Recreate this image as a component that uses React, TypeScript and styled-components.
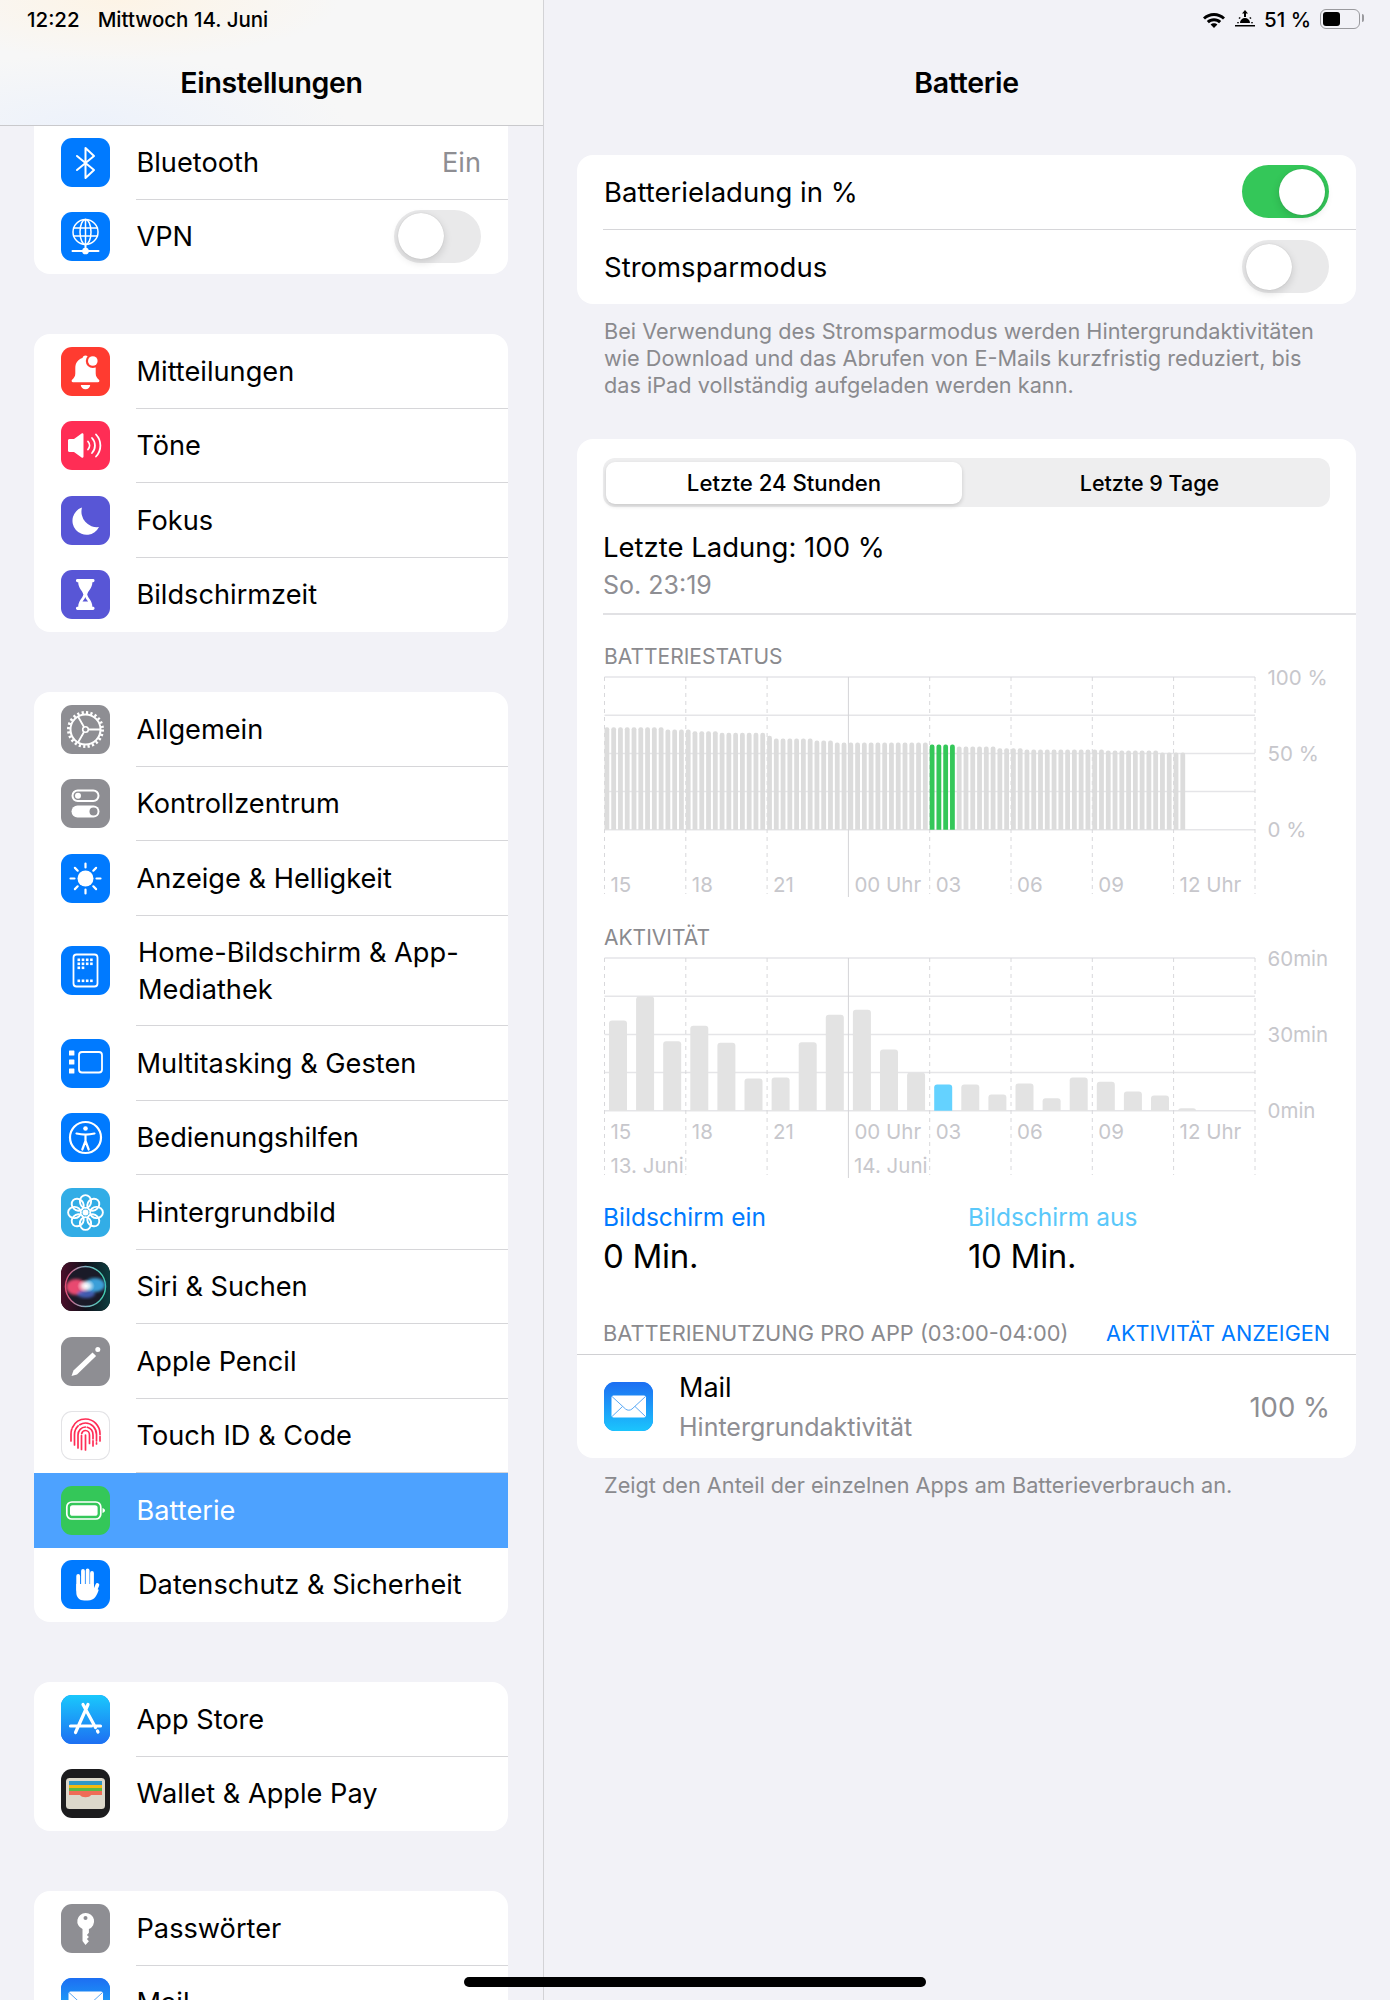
import React from "react";
import styled, { createGlobalStyle } from "styled-components";

const GlobalStyle = createGlobalStyle`
  html, body {
    margin: 0;
    padding: 0;
    background: #f2f2f7;
  }
  body {
    font-family: Inter, "Noto Sans", "Liberation Sans", sans-serif;
    color: #000;
    -webkit-font-smoothing: antialiased;
  }
`;

/* ---------- glyphs, all on a 49x49 icon tile ---------- */

const W = { fill: "none", stroke: "#fff", strokeLinecap: "round", strokeLinejoin: "round" } as const;

const Bluetooth = () => (
  <polyline {...W} strokeWidth={2} points="16,18 33,32 24.5,40 24.5,10 33,18 16,32" />
);

const Vpn = () => (
  <g {...W} strokeWidth={1.5}>
    <circle cx="24.5" cy="20" r="12.5" />
    <ellipse cx="24.5" cy="20" rx="5.5" ry="12.5" />
    <path d="M24.5 7.5v25M12.5 16h24M12.5 24h24" />
    <path d="M24.5 32.5v6M11.5 39h26" strokeWidth={2} />
    <circle cx="24.5" cy="39" r="2.6" fill="#fff" />
  </g>
);

const Bell = () => (
  <g>
    <path
      d="M24.5 8.5c-1.6 0-2.8 1.1-3 2.6-4.6 1.3-7.2 5.2-7.2 10v5.4c0 2.8-1.4 4.6-3.2 6.2-1 .9-.5 2.5 1 2.5h24.8c1.5 0 2-1.6 1-2.5-1.8-1.6-3.2-3.4-3.2-6.2v-5.4c0-5-2.6-8.8-7.2-10-.2-1.5-1.4-2.6-3-2.6z"
      fill="#fff"
    />
    <path d="M19.8 38h9.4a4.7 4.2 0 0 1-9.4 0z" fill="#fff" />
    <circle cx="31.8" cy="14" r="7" fill="#ff3b30" />
    <circle cx="31.8" cy="14" r="4.8" fill="#fff" />
  </g>
);

const Speaker = () => (
  <g>
    <path d="M7 19.5c0-.8.6-1.5 1.5-1.5h4.5l7.6-5.4c.8-.6 1.9 0 1.9 1v21.8c0 1-1.1 1.6-1.9 1L13 31H8.5c-.9 0-1.5-.7-1.5-1.5z" fill="#fff" />
    <path {...W} strokeWidth={1.8} d="M27 20.5a6 6 0 0 1 0 8M31 17a11 11 0 0 1 0 15M35 13.5a16 16 0 0 1 0 22" />
  </g>
);

const Moon = () => <path d="M21 11.5A14 14 0 1 0 38 31 A 15.5 15.5 0 0 1 21 11.5Z" fill="#fff" />;

const Hourglass = () => (
  <g>
    <rect x="15" y="9" width="18.5" height="3.2" rx="1.4" fill="#fff" />
    <rect x="15" y="36.8" width="18.5" height="3.2" rx="1.4" fill="#fff" />
    <path d="M17.2 12h14.2c0 6.2-4.4 8.8-5.2 12.5.8 3.7 5.2 6.3 5.2 12.5H17.2c0-6.2 4.4-8.8 5.2-12.5-.8-3.7-5.2-6.3-5.2-12.5z" fill="#fff" />
    <path d="M21.5 31.5c1.4-1.6 2.2-2.8 2.8-4.4.6 1.6 1.4 2.8 2.8 4.4z" fill="#5856d6" />
  </g>
);

const Gear = () => (
  <g {...W} strokeLinecap="butt">
    <circle cx="24.5" cy="24.5" r="15" strokeWidth={2} />
    <circle cx="24.5" cy="24.5" r="17" strokeWidth={3} strokeDasharray="2.2 2.25" />
    <path d="M27.5 24.5h12M23 22l-6-10.5M23 27l-6 10.5" strokeWidth={1.8} />
    <circle cx="24.5" cy="24.5" r="2.8" strokeWidth={1.6} />
  </g>
);

const Controls = () => (
  <g>
    <rect x="11.5" y="11.5" width="26" height="10.5" rx="5.2" {...W} strokeWidth={2} />
    <circle cx="17" cy="16.8" r="3" fill="#fff" />
    <rect x="10.5" y="26.5" width="28" height="12" rx="6" fill="#fff" />
    <circle cx="32.5" cy="32.5" r="4" fill="#8e8e93" />
  </g>
);

const Sun = () => (
  <g {...W} strokeWidth={2.2}>
    <circle cx="24.5" cy="24.5" r="8" fill="#fff" stroke="none" />
    <path d="M24.5 9.5v4M24.5 35.5v4M9.5 24.5h4M35.5 24.5h4M13.9 13.9l2.8 2.8M32.3 32.3l2.8 2.8M13.9 35.1l2.8-2.8M32.3 16.7l2.8-2.8" />
  </g>
);

const HomeGrid = () => {
  const cells: React.ReactNode[] = [];
  for (let r = 0; r < 3; r++) {
    for (let c = 0; c < (r === 2 ? 2 : 4); c++) {
      cells.push(<rect key={`${r}-${c}`} x={16.5 + c * 4.2} y={12.5 + r * 4} width="2.6" height="2.6" fill="#fff" />);
    }
  }
  for (let c = 0; c < 4; c++) {
    cells.push(<rect key={`d-${c}`} x={16.5 + c * 4.2} y="33.5" width="2.6" height="2.6" fill="#fff" />);
  }
  return (
    <g>
      <rect x="12.5" y="8.5" width="24" height="32" rx="3" {...W} strokeWidth={1.8} />
      {cells}
    </g>
  );
};

const Multitask = () => (
  <g>
    <rect x="8" y="11.5" width="5.4" height="5" fill="#fff" rx="0.6" />
    <rect x="8" y="20.5" width="5.4" height="5" fill="#fff" rx="0.6" />
    <rect x="8" y="29.5" width="5.4" height="5" fill="#fff" rx="0.6" />
    <rect x="18" y="13" width="23" height="20.5" rx="3" {...W} strokeWidth={1.8} />
  </g>
);

const Accessibility = () => (
  <g {...W} strokeWidth={2.2}>
    <circle cx="24.5" cy="24.5" r="15.5" />
    <circle cx="24.5" cy="15.5" r="2.3" fill="#fff" stroke="none" />
    <path d="M15.5 20.5c6 1.4 12 1.4 18 0M24.5 21.5v7M24.5 28l-3.2 8.5M24.5 28l3.2 8.5" />
  </g>
);

const Flower = () => (
  <g {...W} strokeWidth={1.9}>
    {[0, 45, 90, 135, 180, 225, 270, 315].map((a) => (
      <ellipse key={a} cx="24.5" cy="13.5" rx="5.6" ry="6.4" transform={`rotate(${a} 24.5 24.5)`} />
    ))}
    <circle cx="24.5" cy="24.5" r="3" fill="#fff" stroke="none" />
  </g>
);

const Siri = () => (
  <g>
    <defs>
      <linearGradient id="siri-bg" x1="0" y1="0" x2="1" y2="0">
        <stop offset="0" stopColor="#4b0f2a" />
        <stop offset="0.5" stopColor="#10101a" />
        <stop offset="1" stopColor="#0d3d40" />
      </linearGradient>
      <linearGradient id="siri-ring" x1="0" y1="0" x2="1" y2="0">
        <stop offset="0" stopColor="#e0507a" />
        <stop offset="0.5" stopColor="#7fb0c0" />
        <stop offset="1" stopColor="#3fd0b0" />
      </linearGradient>
      <radialGradient id="siri-core">
        <stop offset="0" stopColor="#fff" />
        <stop offset="0.4" stopColor="#fff" stopOpacity="0.75" />
        <stop offset="1" stopColor="#fff" stopOpacity="0" />
      </radialGradient>
      <filter id="siri-blur">
        <feGaussianBlur stdDeviation="1.6" />
      </filter>
    </defs>
    <rect width="49" height="49" fill="url(#siri-bg)" />
    <circle cx="24.5" cy="24.5" r="20" fill="#1a1a28" stroke="url(#siri-ring)" strokeWidth="1.4" />
    <g filter="url(#siri-blur)">
      <ellipse cx="15" cy="25" rx="10" ry="8" fill="#e8486f" />
      <ellipse cx="34" cy="23" rx="10" ry="7" fill="#3a9fd8" />
      <ellipse cx="25" cy="32" rx="9" ry="4" fill="#4a6ad0" opacity="0.8" />
    </g>
    <ellipse cx="25" cy="24" rx="9" ry="7" fill="url(#siri-core)" />
  </g>
);

const Pencil = () => (
  <g fill="#fff">
    <path d="M10.5 39l2-5.5L31.5 15.5l3.6 3.6L16 37.5z" />
    <circle cx="36.8" cy="12.6" r="2.5" />
  </g>
);

const Fingerprint = () => (
  <g fill="none" stroke="#ff2d55" strokeWidth="1.7" strokeLinecap="round">
    <path d="M10 30V23a14.5 15 0 0 1 29 0v7" strokeDasharray="12 1.6 40 2" />
    <path d="M13.5 34V23.5a11 11.5 0 0 1 22 0V33" strokeDasharray="20 2 30 2" />
    <path d="M17 37V24a7.5 8 0 0 1 15 0v11" strokeDasharray="25 2 14 2" />
    <path d="M20.5 38.5V24a4 4.5 0 0 1 8 0v13" strokeDasharray="14 2 20" />
    <path d="M24.5 24v15" />
  </g>
);

const BatteryTile = () => (
  <g>
    <rect x="5.8" y="16" width="34" height="17" rx="5" {...W} strokeWidth={1.7} />
    <rect x="9" y="19.2" width="27.6" height="10.6" rx="2.6" fill="#fff" />
    <path d="M41.5 22c1.5.4 2.5 1.4 2.5 2.5s-1 2.1-2.5 2.5z" fill="#fff" />
  </g>
);

const Hand = () => (
  <g>
    <g {...W} strokeWidth={3.8}>
      <path d="M17.2 16v14M22 11v16M26.6 10.5V27M31 13v16M33 33l3.4-8" />
    </g>
    <path d="M15.3 24h17.6v7.5l2-3 2.8 1.2c-1.6 5-3.6 10.8-11 10.8h-3.4c-5 0-8-3.5-8-8z" fill="#fff" />
  </g>
);

const AppStore = () => (
  <g>
    <defs>
      <linearGradient id="store-bg" x1="0" y1="0" x2="0" y2="1">
        <stop offset="0" stopColor="#1ac8fc" />
        <stop offset="1" stopColor="#1d6ff2" />
      </linearGradient>
    </defs>
    <rect width="49" height="49" fill="url(#store-bg)" />
    <path {...W} strokeWidth={3.2} d="M22 9.500l12.500 23M27 9.500L14.500 37.500M9.500 31h21M34 31h5.500M36.500 36l.5 1" />
  </g>
);

const Wallet = () => (
  <g>
    <rect x="5" y="9" width="39" height="31" rx="3.5" fill="#dcd8cb" />
    <rect x="8" y="12" width="33" height="4" fill="#3098c8" />
    <rect x="8" y="16" width="33" height="3" fill="#f5b90f" />
    <rect x="8" y="19" width="33" height="3" fill="#5bb947" />
    <path d="M8 22h33v4H30c-1.5 3-9.500 3-11 0H8z" fill="#ef6c57" />
  </g>
);

const Key = () => (
  <g>
    <path
      d="M24.5 9a8.300 8.300 0 0 0-3 16V37l3 4 3.400-3.800-2-2.200 2-2-2-2 2-2.200V25a8.300 8.300 0 0 0-3.400-16z"
      fill="#fff"
    />
    <circle cx="24.5" cy="14" r="2" fill="#8e8e93" />
  </g>
);

const Envelope = ({ id }: { id: string }) => (
  <g>
    <defs>
      <linearGradient id={id} x1="0" y1="0" x2="0" y2="1">
        <stop offset="0" stopColor="#1d6ef2" />
        <stop offset="1" stopColor="#1bc5fd" />
      </linearGradient>
    </defs>
    <rect width="49" height="49" fill={`url(#${id})`} />
    <rect x="7.500" y="13.500" width="34.500" height="22" rx="2" fill="#fff" />
    <path d="M8 14.500l13.500 12.500c1.800 1.600 4.700 1.600 6.500 0L41.500 14.500M8 34.500l10.500-10M41.500 34.500L31 24.500" fill="none" stroke="#5aa9f5" strokeWidth="1" />
  </g>
);

/* ---------- sidebar data ---------- */

type Item = {
  label: string;
  bg: string;
  glyph: React.ReactNode;
  value?: string;
  toggle?: boolean;
  tall?: boolean;
  shift?: boolean;
  active?: boolean;
  outlined?: boolean;
};

const BLUE = "#007aff";
const GRAY = "#8e8e93";
const INDIGO = "#5856d6";

const GROUPS: Item[][] = [
  [
    { label: "Bluetooth", bg: BLUE, glyph: <Bluetooth />, value: "Ein" },
    { label: "VPN", bg: BLUE, glyph: <Vpn />, toggle: true },
  ],
  [
    { label: "Mitteilungen", bg: "#ff3b30", glyph: <Bell /> },
    { label: "Töne", bg: "#ff2d55", glyph: <Speaker /> },
    { label: "Fokus", bg: INDIGO, glyph: <Moon /> },
    { label: "Bildschirmzeit", bg: INDIGO, glyph: <Hourglass /> },
  ],
  [
    { label: "Allgemein", bg: GRAY, glyph: <Gear /> },
    { label: "Kontrollzentrum", bg: GRAY, glyph: <Controls /> },
    { label: "Anzeige & Helligkeit", bg: BLUE, glyph: <Sun /> },
    { label: "Home-Bildschirm & App-Mediathek", bg: BLUE, glyph: <HomeGrid />, tall: true, shift: true },
    { label: "Multitasking & Gesten", bg: BLUE, glyph: <Multitask /> },
    { label: "Bedienungshilfen", bg: BLUE, glyph: <Accessibility /> },
    { label: "Hintergrundbild", bg: "#32ade6", glyph: <Flower /> },
    { label: "Siri & Suchen", bg: "#111", glyph: <Siri /> },
    { label: "Apple Pencil", bg: GRAY, glyph: <Pencil /> },
    { label: "Touch ID & Code", bg: "#fff", glyph: <Fingerprint />, outlined: true },
    { label: "Batterie", bg: "#34c759", glyph: <BatteryTile />, active: true },
    { label: "Datenschutz & Sicherheit", bg: BLUE, glyph: <Hand />, shift: true },
  ],
  [
    { label: "App Store", bg: BLUE, glyph: <AppStore /> },
    { label: "Wallet & Apple Pay", bg: "#1c1c1e", glyph: <Wallet /> },
  ],
  [
    { label: "Passwörter", bg: GRAY, glyph: <Key /> },
    { label: "Mail", bg: BLUE, glyph: <Envelope id="mail-side" /> },
  ],
];

/* ---------- charts ---------- */

const LINES_X = [1.5, 82.8, 164.1, 245.4, 326.7, 408, 489.3, 570.6, 652];
const HOURS = ["15", "18", "21", "00 Uhr", "03", "06", "09", "12 Uhr"];
const GRID_Y = [5, 43.2, 81.4, 119.6, 157.8];
const STEP = 6.775;

const LEVEL_RUNS: [number, number][] = [
  [288, 9], [295, 4], [300, 4], [305, 7], [314, 1], [322, 6], [328, 3],
  [334, 14], [340, 4], [346, 6], [351, 4], [355, 12], [358, 8], [364, 4],
];
const LEVELS = LEVEL_RUNS.flatMap(([top, n]) => Array<number>(n).fill(top));

const ACTIVITY = [300, 228, 362, 316, 367, 474, 471, 365, 283, 268, 387, 456, 492, 492, 522, 489, 533, 471, 484, 513, 525, 563];

const topBar = (x: number, w: number, top: number, base: number, r: number) =>
  `M${x} ${base}V${top + r}Q${x} ${top} ${x + r} ${top}H${x + w - r}Q${x + w} ${top} ${x + w} ${top + r}V${base}Z`;

const ChartGrid = ({ yLabels, children, dates }: { yLabels: string[]; children: React.ReactNode; dates?: boolean }) => (
  <ChartSvg viewBox="0 -6 730 236">
    {GRID_Y.map((y) => (
      <line key={y} x1={1.5} x2={652} y1={y} y2={y} stroke="#e5e5e8" strokeWidth={1.5} />
    ))}
    {LINES_X.map((x, i) =>
      i === 3 ? (
        <line key={x} x1={x} x2={x} y1={5} y2={225} stroke="#d4d4d7" strokeWidth={1} />
      ) : (
        <line key={x} x1={x} x2={x} y1={5} y2={222} stroke="#d8d8db" strokeWidth={1} strokeDasharray="4 4" />
      ),
    )}
    {children}
    {HOURS.map((h, i) => (
      <AxisText key={h} x={LINES_X[i] + 6} y={dates ? 186 : 220}>
        {h}
      </AxisText>
    ))}
    {dates && (
      <>
        <AxisText x={7.5} y={220}>13. Juni</AxisText>
        <AxisText x={251} y={220}>14. Juni</AxisText>
      </>
    )}
    {yLabels.map((l, i) => (
      <AxisText key={l} x={664.5} y={12.5 + i * 76.4}>
        {l}
      </AxisText>
    ))}
  </ChartSvg>
);

const BatteryChart = () => (
  <ChartGrid yLabels={["100 %", "50 %", "0 %"]}>
    {LEVELS.map((top, i) => (
      <path
        key={i}
        d={topBar(1.5 + i * STEP, 4.8, 157.8 - (596 - top) / 3, 157.8, 2.2)}
        fill={i >= 48 && i <= 51 ? "#34c759" : "#dcdcdc"}
      />
    ))}
  </ChartGrid>
);

const ActivityChart = () => (
  <ChartGrid yLabels={["60min", "30min", "0min"]} dates>
    {ACTIVITY.map((top, i) => (
      <path
        key={i}
        d={topBar(6 + i * 27.1, 18, 157.8 - (571 - top) / 3, 157.8, 3)}
        fill={i === 12 ? "#64d2ff" : "#e3e3e3"}
      />
    ))}
  </ChartGrid>
);

/* ---------- page ---------- */

export default function App() {
  return (
    <>
      <GlobalStyle />
      <Page>
        <Sidebar>
          <SideHeader>
            <StatusBar>
              <StatusTime>12:22</StatusTime>
              <StatusTime>Mittwoch 14. Juni</StatusTime>
            </StatusBar>
            <NavTitle>Einstellungen</NavTitle>
          </SideHeader>
          <SideList>
            {GROUPS.map((group, g) => (
              <SideGroup key={g} $first={g === 0}>
                {group.map((item) => (
                  <SideRow key={item.label} $tall={item.tall} $active={item.active}>
                    <IconTile $bg={item.bg} $outlined={item.outlined}>
                      <svg viewBox="0 0 49 49" width="49" height="49">
                        {item.glyph}
                      </svg>
                    </IconTile>
                    <SideBody $active={item.active}>
                      <SideLabel $shift={item.shift} $active={item.active}>
                        {item.label}
                      </SideLabel>
                      {item.value && <SideValue>{item.value}</SideValue>}
                      {item.toggle && <Toggle />}
                    </SideBody>
                  </SideRow>
                ))}
              </SideGroup>
            ))}
          </SideList>
        </Sidebar>

        <Detail>
          <StatusBar $end>
            <svg width="24" height="18" viewBox="0 0 24 18">
              <path d="M12 3C7.800 3 4 4.600 1 7.400l2 2.200C5.500 7.300 8.600 6 12 6s6.500 1.300 9 3.600l2-2.200C20 4.600 16.200 3 12 3z" fill="#000" />
              <path d="M12 8.200c-2.800 0-5.300 1-7.200 2.800l2.100 2.200c1.400-1.200 3.100-2 5.100-2s3.700.800 5.100 2l2.100-2.200c-1.900-1.800-4.400-2.800-7.200-2.800z" fill="#000" />
              <path d="M12 13.300c-1.300 0-2.500.500-3.400 1.300L12 18l3.400-3.400c-.9-.8-2.100-1.300-3.400-1.300z" fill="#000" />
            </svg>
            <svg width="20" height="20" viewBox="0 0 20 20">
              <path d="M10 1l3 3.500h-2V8H9V4.500H7zM5 14a5 5 0 0 1 10 0z" fill="#000" />
              <path d="M0 16h20v1.600H0zM2 13.200h2v1H2zM16 13.200h2v1h-2zM3.500 9l1.400-1 .8 1-1.400 1zM16.500 9l-1.400-1-.8 1 1.400 1z" fill="#000" />
            </svg>
            <StatusTime>51 %</StatusTime>
            <BatteryOutline>
              <BatteryLevel />
            </BatteryOutline>
          </StatusBar>
          <NavTitle>Batterie</NavTitle>

          <Card $top={30}>
            <SettingRow>
              <SettingBody>
                <SettingLabel>Batterieladung in %</SettingLabel>
                <Toggle $on />
              </SettingBody>
            </SettingRow>
            <SettingRow>
              <SettingBody>
                <SettingLabel>Stromsparmodus</SettingLabel>
                <Toggle />
              </SettingBody>
            </SettingRow>
          </Card>
          <Footnote>
            Bei Verwendung des Stromsparmodus werden Hintergrundaktivitäten
            <br />
            wie Download und das Abrufen von E-Mails kurzfristig reduziert, bis
            <br />
            das iPad vollständig aufgeladen werden kann.
          </Footnote>

          <Card $top={40.5}>
            <Segmented>
              <Segment $selected>Letzte 24 Stunden</Segment>
              <Segment $nudge>Letzte 9 Tage</Segment>
            </Segmented>

            <ChargeInfo>
              <ChargeTitle>Letzte Ladung: 100 %</ChargeTitle>
              <ChargeTime>So. 23:19</ChargeTime>
            </ChargeInfo>

            <ChartTitle $top={26.5}>BATTERIESTATUS</ChartTitle>
            <BatteryChart />
            <ChartTitle $top={21.5}>AKTIVITÄT</ChartTitle>
            <ActivityChart />

            <Stats>
              <div>
                <StatLabel $color="#007aff">Bildschirm ein</StatLabel>
                <StatValue>0 Min.</StatValue>
              </div>
              <div>
                <StatLabel $color="#5ac8fa">Bildschirm aus</StatLabel>
                <StatValue>10 Min.</StatValue>
              </div>
            </Stats>

            <UsageHeader>
              <UsageTitle>BATTERIENUTZUNG PRO APP (03:00-04:00)</UsageTitle>
              <UsageLink>AKTIVITÄT ANZEIGEN</UsageLink>
            </UsageHeader>

            <UsageRow>
              <IconTile $bg={BLUE}>
                <svg viewBox="0 0 49 49" width="49" height="49">
                  <Envelope id="mail-usage" />
                </svg>
              </IconTile>
              <UsageText>
                <UsageName>Mail</UsageName>
                <UsageSub>Hintergrundaktivität</UsageSub>
              </UsageText>
              <UsagePercent>100 %</UsagePercent>
            </UsageRow>
          </Card>
          <Footnote>Zeigt den Anteil der einzelnen Apps am Batterieverbrauch an.</Footnote>
        </Detail>

        <HomeIndicator />
      </Page>
    </>
  );
}

const Page = styled.div`
  position: relative;
  display: flex;
  width: 1390px;
  height: 2000px;
  overflow: hidden;
  background: #f2f2f7;
`;

const Sidebar = styled.aside`
  flex: none;
  width: 544px;
  height: 100%;
  border-right: 1px solid #d3d3d6;
  box-sizing: border-box;
  overflow: hidden;
`;

const SideHeader = styled.header`
  position: relative;
  z-index: 1;
  height: 126px;
  margin-bottom: -1px;
  box-sizing: border-box;
  border-bottom: 1px solid #c9c9cc;
  background:
    radial-gradient(220px 60px at 22% 0, #fdf4e6 0, rgba(253, 244, 230, 0) 100%),
    radial-gradient(260px 70px at 16% 100%, #edf2fb 0, rgba(237, 242, 251, 0) 100%),
    #f7f7f7;
`;

const StatusBar = styled.div<{ $end?: boolean }>`
  display: flex;
  align-items: center;
  height: 40px;
  box-sizing: border-box;
  gap: ${(p) => (p.$end ? "9px" : "18px")};
  justify-content: ${(p) => (p.$end ? "flex-end" : "flex-start")};
  padding: ${(p) => (p.$end ? "0 0 2px" : "0 0 2px 27px")};
  margin-right: ${(p) => (p.$end ? "-4px" : "0")};
`;

const StatusTime = styled.span`
  font-size: 20.5px;
  font-weight: 500;
`;

const BatteryOutline = styled.div`
  position: relative;
  width: 40px;
  height: 20px;
  box-sizing: border-box;
  padding: 2px;
  border: 1.5px solid #9a9a9e;
  border-radius: 6px;
  &::after {
    content: "";
    position: absolute;
    right: -5px;
    top: 4px;
    width: 2px;
    height: 8px;
    border-radius: 0 2px 2px 0;
    background: #9a9a9e;
  }
`;

const BatteryLevel = styled.div`
  width: 51%;
  height: 100%;
  border-radius: 3px;
  background: #000;
`;

const NavTitle = styled.h1`
  margin: 0;
  height: 85px;
  display: flex;
  align-items: center;
  justify-content: center;
  font-size: 28.5px;
  font-weight: 600;
  letter-spacing: -0.3px;
`;

const SideList = styled.div`
  display: flex;
  flex-direction: column;
  gap: 60px;
  padding: 0 35px 0 34px;
`;

const SideGroup = styled.div<{ $first?: boolean }>`
  flex: none;
  overflow: hidden;
  background: #fff;
  border-radius: ${(p) => (p.$first ? "0 0 16px 16px" : "16px")};
`;

const SideRow = styled.div<{ $tall?: boolean; $active?: boolean }>`
  display: flex;
  align-items: center;
  height: ${(p) => (p.$tall ? "110.5px" : "74.5px")};
  padding-left: 27px;
  background: ${(p) => (p.$active ? "#4da2ff" : "transparent")};
`;

const IconTile = styled.div<{ $bg: string; $outlined?: boolean }>`
  flex: none;
  width: 49px;
  height: 49px;
  border-radius: 11px;
  overflow: hidden;
  background: ${(p) => p.$bg};
  box-shadow: ${(p) => (p.$outlined ? "inset 0 0 0 1px #e3e3e6" : "none")};
  svg {
    display: block;
  }
`;

const SideBody = styled.div<{ $active?: boolean }>`
  flex: 1;
  align-self: stretch;
  min-width: 0;
  display: flex;
  align-items: center;
  justify-content: space-between;
  margin-left: 25.5px;
  padding-right: 27px;
  box-sizing: border-box;
  border-bottom: 1px solid ${(p) => (p.$active ? "transparent" : "#d6d6d9")};
  ${SideRow}:last-child & {
    border-bottom-color: transparent;
  }
`;

const SideLabel = styled.span<{ $shift?: boolean; $active?: boolean }>`
  margin-left: ${(p) => (p.$shift ? "2.5px" : "1px")};
  padding-top: 1px;
  font-size: 27.2px;
  line-height: 37px;
  color: ${(p) => (p.$active ? "#fff" : "#000")};
`;

const SideValue = styled.span`
  padding-top: 1px;
  font-size: 27.2px;
  color: #8e8e93;
`;

const Toggle = styled.div<{ $on?: boolean }>`
  position: relative;
  flex: none;
  width: 87px;
  height: 53px;
  border-radius: 27px;
  background: ${(p) => (p.$on ? "#34c759" : "#e9e9ea")};
  &::after {
    content: "";
    position: absolute;
    top: 3.5px;
    left: ${(p) => (p.$on ? "37px" : "3.5px")};
    width: 46px;
    height: 46px;
    border-radius: 50%;
    background: #fff;
    box-shadow: 0 3px 8px rgba(0, 0, 0, 0.14), 0 0 1px rgba(0, 0, 0, 0.2);
  }
`;

const Detail = styled.main`
  flex: 1;
  min-width: 0;
  padding: 0 34px 0 33px;
`;

const Card = styled.section<{ $top: number }>`
  margin-top: ${(p) => p.$top}px;
  overflow: hidden;
  background: #fff;
  border-radius: 16px;
`;

const SettingRow = styled.div`
  height: 74.5px;
  padding-left: 26px;
`;

const SettingBody = styled.div`
  display: flex;
  align-items: center;
  justify-content: space-between;
  height: 100%;
  box-sizing: border-box;
  padding-right: 27px;
  border-bottom: 1px solid #d6d6d9;
  ${SettingRow}:last-child & {
    border-bottom: 0;
  }
`;

const SettingLabel = styled.span`
  margin-left: 1px;
  font-size: 27.5px;
`;

const Footnote = styled.p`
  margin: 13.5px 0 0 27px;
  font-size: 21.7px;
  line-height: 27px;
  white-space: nowrap;
  color: #8a8a8e;
`;

const Segmented = styled.div`
  display: flex;
  width: 727px;
  height: 49px;
  margin: 19px 0 0 26px;
  box-sizing: border-box;
  padding: 3.5px 3px;
  border-radius: 12px;
  background: #eeeeef;
`;

const Segment = styled.div<{ $selected?: boolean; $nudge?: boolean }>`
  flex: ${(p) => (p.$selected ? "0 0 356px" : "1")};
  display: flex;
  align-items: center;
  justify-content: center;
  padding-left: ${(p) => (p.$nudge ? "10px" : "0")};
  border-radius: 9px;
  font-size: ${(p) => (p.$nudge ? "21.5px" : "22.2px")};
  font-weight: 500;
  background: ${(p) => (p.$selected ? "#fff" : "transparent")};
  box-shadow: ${(p) => (p.$selected ? "0 2px 4px rgba(0, 0, 0, 0.16)" : "none")};
`;

const ChargeInfo = styled.div`
  margin: 23px 0 0 26px;
  height: 85px;
  box-sizing: border-box;
  border-bottom: 2px solid #e1e1e4;
`;

const ChargeTitle = styled.div`
  font-size: 27.5px;
  line-height: 34px;
`;

const ChargeTime = styled.div`
  margin-top: 5px;
  font-size: 25px;
  line-height: 32px;
  color: #8e8e93;
`;

const ChartTitle = styled.div<{ $top: number }>`
  margin: ${(p) => p.$top}px 0 -6px 27px;
  font-size: 21px;
  line-height: 30px;
  color: #8a8a8e;
`;

const ChartSvg = styled.svg`
  display: block;
  width: 730px;
  height: 236px;
  margin-left: 26px;
`;

const AxisText = styled.text`
  font-family: Inter, "Noto Sans", sans-serif;
  font-size: 20.5px;
  fill: #c7c7cc;
`;

const Stats = styled.div`
  display: grid;
  grid-template-columns: 365px 1fr;
  margin: 18px 0 0 26px;
`;

const StatLabel = styled.div<{ $color: string }>`
  font-size: 24.5px;
  line-height: 32px;
  color: ${(p) => p.$color};
`;

const StatValue = styled.div`
  margin-top: 2px;
  font-size: 33px;
  line-height: 42px;
  letter-spacing: -0.3px;
`;

const UsageHeader = styled.div`
  display: flex;
  align-items: center;
  justify-content: space-between;
  box-sizing: border-box;
  height: 43px;
  margin-top: 35px;
  padding: 0 26px;
  border-bottom: 1px solid #d0d0d3;
`;

const UsageTitle = styled.span`
  font-size: 21.8px;
  color: #8a8a8e;
`;

const UsageLink = styled.span`
  font-size: 21.6px;
  color: #007aff;
`;

const UsageRow = styled.div`
  display: flex;
  align-items: center;
  height: 103px;
  padding: 0 26px 0 27px;
`;

const UsageText = styled.div`
  flex: 1;
  margin-left: 26px;
`;

const UsageName = styled.div`
  font-size: 27px;
  line-height: 36px;
`;

const UsageSub = styled.div`
  margin-top: 4px;
  font-size: 25px;
  line-height: 34px;
  color: #8e8e93;
`;

const UsagePercent = styled.span`
  font-size: 27.5px;
  color: #8e8e93;
`;

const HomeIndicator = styled.div`
  position: absolute;
  left: 464px;
  bottom: 13px;
  width: 462px;
  height: 10px;
  border-radius: 5px;
  background: #000;
`;
